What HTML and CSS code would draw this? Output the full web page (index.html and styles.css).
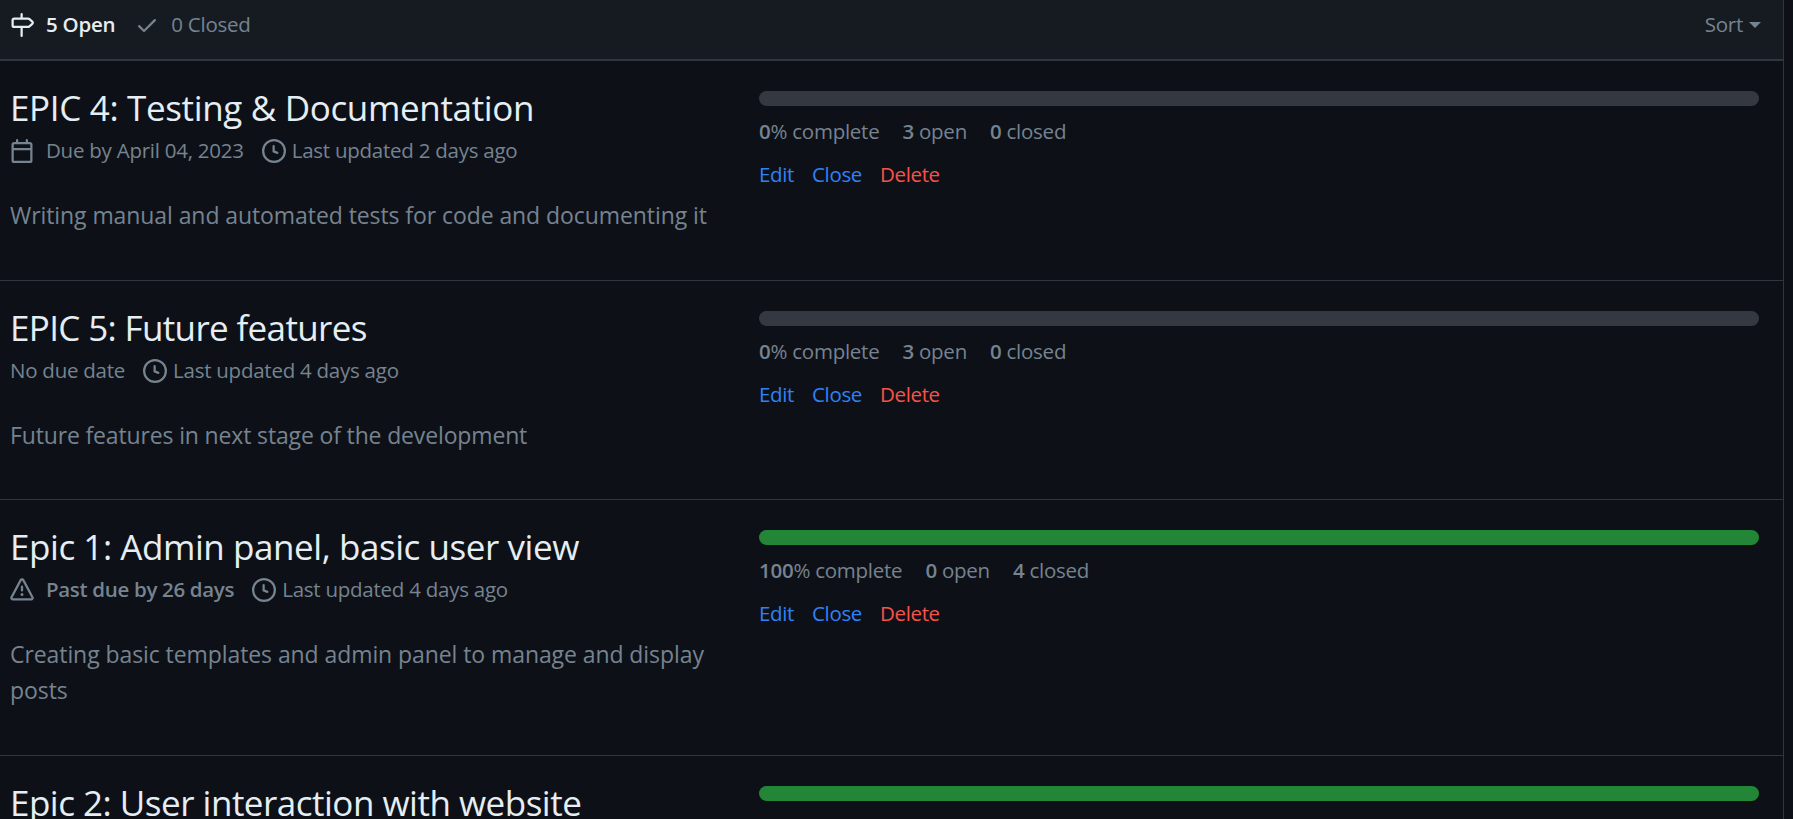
FILE: index.html
```html
<!DOCTYPE html>
<html lang="en">
<head>
<meta charset="utf-8">
<title>Milestones</title>
<link rel="stylesheet" href="styles.css">
</head>
<body>
<svg class="sprite" aria-hidden="true">
  <symbol id="milestone" viewBox="0 0 16 16"><path d="M7.75 0a.75.75 0 0 1 .75.75V3h3.634c.414 0 .814.147 1.13.414l2.07 1.75a1.75 1.75 0 0 1 0 2.672l-2.07 1.75a1.75 1.75 0 0 1-1.13.414H8.5v5.25a.75.75 0 0 1-1.5 0V10H2.75A1.75 1.75 0 0 1 1 8.25v-3.5C1 3.784 1.784 3 2.75 3H7V.75A.75.75 0 0 1 7.75 0Zm4.384 8.5a.25.25 0 0 0 .161-.06l2.07-1.75a.248.248 0 0 0 0-.38l-2.07-1.75a.25.25 0 0 0-.161-.06H2.75a.25.25 0 0 0-.25.25v3.5c0 .138.112.25.25.25h9.384Z"/></symbol>
  <symbol id="check" viewBox="0 0 16 16"><path d="M13.78 4.22a.75.75 0 0 1 0 1.06l-7.25 7.25a.75.75 0 0 1-1.06 0L2.22 9.28a.751.751 0 0 1 .018-1.042.751.751 0 0 1 1.042-.018L6 10.94l6.72-6.72a.75.75 0 0 1 1.06 0Z"/></symbol>
  <symbol id="calendar" viewBox="0 0 16 16"><path d="M4.75 0a.75.75 0 0 1 .75.75V2h5V.75a.75.75 0 0 1 1.5 0V2h1.25c.966 0 1.75.784 1.75 1.75v10.5A1.75 1.75 0 0 1 13.25 16H2.75A1.75 1.75 0 0 1 1 14.25V3.75C1 2.784 1.784 2 2.75 2H4V.75A.75.75 0 0 1 4.75 0ZM2.5 7.5v6.75c0 .138.112.25.25.25h10.5a.25.25 0 0 0 .25-.25V7.5Zm10.75-4H2.75a.25.25 0 0 0-.25.25V6h11V3.75a.25.25 0 0 0-.25-.25Z"/></symbol>
  <symbol id="clock" viewBox="0 0 16 16"><path d="M8 0a8 8 0 1 1 0 16A8 8 0 0 1 8 0ZM1.5 8a6.5 6.5 0 1 0 13 0 6.5 6.5 0 0 0-13 0Zm7-3.25v2.992l2.028.812a.75.75 0 0 1-.557 1.392l-2.5-1A.751.751 0 0 1 7 8.25v-3.5a.75.75 0 0 1 1.5 0Z"/></symbol>
  <symbol id="alert" viewBox="0 0 16 16"><path d="M6.457 1.047c.659-1.234 2.427-1.234 3.086 0l6.082 11.378A1.75 1.75 0 0 1 14.082 15H1.918a1.75 1.75 0 0 1-1.543-2.575Zm1.763.707a.25.25 0 0 0-.44 0L1.698 13.132a.25.25 0 0 0 .22.368h12.164a.25.25 0 0 0 .22-.368Zm.53 3.996v2.5a.75.75 0 0 1-1.5 0v-2.5a.75.75 0 0 1 1.5 0ZM9 11a1 1 0 1 1-2 0 1 1 0 0 1 2 0Z"/></symbol>
</svg>
<main class="box">
  <header class="box-header">
    <nav class="states">
      <a class="state selected"><svg class="icon"><use href="#milestone"/></svg><span>5 Open</span></a>
      <a class="state"><svg class="icon"><use href="#check"/></svg><span>0 Closed</span></a>
    </nav>
    <div class="sort"><span>Sort</span><span class="caret"></span></div>
  </header>

  <section class="row first">
    <div class="info">
      <h2 class="title title-testing">EPIC 4: Testing &amp; Documentation</h2>
      <div class="meta">
        <svg class="icon"><use href="#calendar"/></svg><span class="due">Due by April 04, 2023</span>
        <svg class="icon clock"><use href="#clock"/></svg><span>Last updated 2 days ago</span>
      </div>
      <p class="description">Writing manual and automated tests for code and documenting it</p>
    </div>
    <div class="progress">
      <div class="bar"></div>
      <div class="stats"><span><b>0</b>% complete</span><span><b>3</b> open</span><span><b>0</b> closed</span></div>
      <div class="actions"><a>Edit</a><a>Close</a><a class="danger">Delete</a></div>
    </div>
  </section>

  <section class="row">
    <div class="info">
      <h2 class="title title-future">EPIC 5: Future features</h2>
      <div class="meta">
        <span>No due date</span>
        <svg class="icon clock"><use href="#clock"/></svg><span>Last updated 4 days ago</span>
      </div>
      <p class="description description-future">Future features in next stage of the development</p>
    </div>
    <div class="progress">
      <div class="bar"></div>
      <div class="stats"><span><b>0</b>% complete</span><span><b>3</b> open</span><span><b>0</b> closed</span></div>
      <div class="actions"><a>Edit</a><a>Close</a><a class="danger">Delete</a></div>
    </div>
  </section>

  <section class="row tall">
    <div class="info">
      <h2 class="title title-admin">Epic 1: Admin panel, basic user view</h2>
      <div class="meta">
        <svg class="icon"><use href="#alert"/></svg><span class="due past">Past due by 26 days</span>
        <svg class="icon clock"><use href="#clock"/></svg><span>Last updated 4 days ago</span>
      </div>
      <p class="description">Creating basic templates and admin panel to manage and display posts</p>
    </div>
    <div class="progress">
      <div class="bar full"></div>
      <div class="stats"><span><b>100</b>% complete</span><span><b>0</b> open</span><span><b>4</b> closed</span></div>
      <div class="actions"><a>Edit</a><a>Close</a><a class="danger">Delete</a></div>
    </div>
  </section>

  <section class="row">
    <div class="info">
      <h2 class="title title-interaction">Epic 2: User interaction with website</h2>
    </div>
    <div class="progress">
      <div class="bar full"></div>
      <div class="stats"><span><b>100</b>% complete</span><span><b>0</b> open</span><span><b>4</b> closed</span></div>
    </div>
  </section>
</main>
</body>
</html>
```
FILE: styles.css
```css
* { box-sizing: border-box; }

body {
  margin: 0;
  height: 819px;
  overflow: hidden;
  background: #0d1117;
  color: #768390;
  font-family: "Segoe UI", "Open Sans", "Noto Sans", sans-serif;
  font-size: 20.5px;
  line-height: 30px;
  letter-spacing: -0.25px;
}

.sprite { position: absolute; width: 0; height: 0; }

.box {
  width: 1784px;
  height: 819px;
  overflow: hidden;
  border-right: 1px solid #30363d;
}

.box-header {
  display: flex;
  justify-content: space-between;
  height: 61px;
  padding: 10px 22px 0 10px;
  background: #161b22;
  border-bottom: 2px solid #30363d;
}

.states { display: flex; gap: 20px; }
.state { display: flex; height: 30px; align-items: center; gap: 12px; }
.state span { padding-bottom: 2px; }
.selected { color: #e6edf3; font-weight: 600; }
.icon { flex: none; width: 24px; height: 24px; fill: currentColor; }

.sort { display: flex; height: 30px; align-items: center; gap: 6px; }
.sort span:first-child { padding-bottom: 2px; }
.caret {
  border: 6px solid transparent;
  border-top-color: currentColor;
  border-bottom-width: 0;
}

.row {
  display: flex;
  height: 219px;
  padding: 30px 24px 0 10px;
  border-bottom: 1px solid #30363d;
}
.first { height: 220px; }
.tall { height: 256px; }

.info { width: 749px; }

.title {
  margin: -6px 0 0;
  color: #e6edf3;
  font-size: 35px;
  font-weight: 400;
  line-height: 45px;
  letter-spacing: -0.6px;
  white-space: nowrap;
}
.title-testing { letter-spacing: -0.34px; }
.title-future { letter-spacing: -0.65px; }
.title-admin { letter-spacing: -0.44px; }
.title-interaction { letter-spacing: -0.5px; }

.meta { display: flex; height: 30px; margin-top: 6px; align-items: center; white-space: nowrap; }
.meta span { padding-bottom: 2px; }
.due { margin-left: 12px; }
.past { font-weight: 600; letter-spacing: -0.32px; }
.clock { margin: 0 6px 0 18px; }

.description {
  width: 710px;
  margin: 31px 0 0;
  font-size: 23px;
  line-height: 36px;
  letter-spacing: -0.08px;
}
.description-future { letter-spacing: -0.15px; }

.progress { flex: 1; }
.bar { height: 15px; border-radius: 8px; background: #343941; }
.full { background: #238636; }
.stats { display: flex; gap: 23px; margin-top: 10px; white-space: nowrap; }
.stats b { font-weight: 600; }
.actions { display: flex; gap: 18px; margin-top: 13px; color: #2f81f7; letter-spacing: -0.35px; }
.danger { color: #f85149; }
```
